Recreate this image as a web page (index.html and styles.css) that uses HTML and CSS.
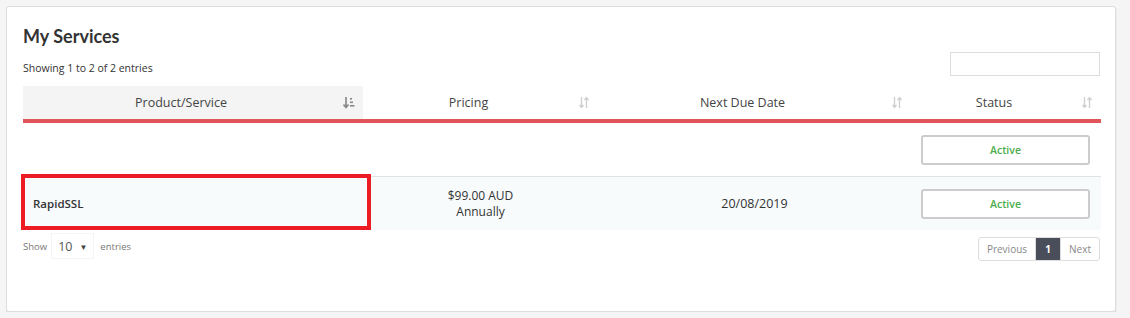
FILE: index.html
```html
<!DOCTYPE html>
<html>
<head>
  <meta charset="utf-8">
  <title>My Services</title>
  <link rel="stylesheet" href="styles.css">
</head>
<body>
  <div class="card">
    <h2 class="title">My Services</h2>
    <div class="toolbar">
      <span class="info">Showing 1 to 2 of 2 entries</span>
      <input class="search" type="text">
    </div>

    <div class="table-wrap">
      <table class="services">
        <thead>
          <tr>
            <th class="col-product sorted">Product/Service
              <svg class="sort" width="12" height="13" viewBox="0 0 12 13"><path d="M3 1v10M0.5 8.5L3 11.5 5.5 8.5" fill="none" stroke="#888" stroke-width="1.6"/><rect x="7" y="2" width="2" height="1.6" fill="#888"/><rect x="7" y="5.5" width="3" height="1.6" fill="#888"/><rect x="7" y="9" width="4.5" height="1.6" fill="#888"/></svg>
            </th>
            <th class="col-pricing">Pricing
              <svg class="sort" width="12" height="13" viewBox="0 0 12 13"><path d="M3.5 1v10.5M1.5 9L3.5 11.5 5.5 9M8.5 12V1.5M6.5 4L8.5 1.5 10.5 4" fill="none" stroke="#d0d0d0" stroke-width="1.4"/></svg>
            </th>
            <th class="col-due">Next Due Date
              <svg class="sort" width="12" height="13" viewBox="0 0 12 13"><path d="M3.5 1v10.5M1.5 9L3.5 11.5 5.5 9M8.5 12V1.5M6.5 4L8.5 1.5 10.5 4" fill="none" stroke="#d0d0d0" stroke-width="1.4"/></svg>
            </th>
            <th class="col-status">Status
              <svg class="sort" width="12" height="13" viewBox="0 0 12 13"><path d="M3.5 1v10.5M1.5 9L3.5 11.5 5.5 9M8.5 12V1.5M6.5 4L8.5 1.5 10.5 4" fill="none" stroke="#d0d0d0" stroke-width="1.4"/></svg>
            </th>
          </tr>
        </thead>
        <tbody>
          <tr>
            <td></td>
            <td></td>
            <td></td>
            <td><span class="status">Active</span></td>
          </tr>
          <tr class="alt">
            <td class="product"><strong>RapidSSL</strong></td>
            <td class="center">$99.00 AUD<br>Annually</td>
            <td class="center date">20/08/2019</td>
            <td><span class="status">Active</span></td>
          </tr>
        </tbody>
      </table>
      <div class="highlight"></div>
    </div>

    <div class="footer">
      <div class="length">
        Show
        <span class="select">10 <span class="caret">&#9660;</span></span>
        entries
      </div>
      <div class="pager">
        <a href="#" class="page">Previous</a>
        <a href="#" class="page current">1</a>
        <a href="#" class="page">Next</a>
      </div>
    </div>
  </div>
</body>
</html>
```

FILE: styles.css
```css
/* General Styling */
body {
  margin: 6px;
  padding: 0;
  background-color: #f5f5f5;
  font-family: "Open Sans", Arial, sans-serif;
  color: #333;
}

.card {
  width: 1077px;
  height: 286px;
  padding: 18px 15px 0 16px;
  background: white;
  border: 1px solid #ddd;
  border-radius: 3px;
  box-shadow: 0 2px 2px rgba(0, 0, 0, 0.12);
}

.title {
  margin: 0;
  font-family: Lato, "Open Sans", sans-serif;
  font-size: 18px;
  font-weight: bold;
  line-height: 22px;
  color: #333;
}

.toolbar {
  display: flex;
  justify-content: space-between;
  align-items: flex-end;
  margin-top: 5px;
}

.info {
  font-size: 10.5px;
  line-height: 14px;
  margin-bottom: 1px;
}

.search {
  width: 146px;
  height: 20px;
  margin: 0;
  padding: 1px;
  border: 1px solid #ddd;
  border-radius: 0;
}

/* Table */
.table-wrap {
  position: relative;
  margin-top: 10px;
}

.services {
  width: 1078px;
  border-collapse: collapse;
  table-layout: fixed;
}

.services th {
  position: relative;
  height: 33px;
  padding: 0 24px 0 0;
  font-size: 12.5px;
  font-weight: normal;
  color: #444;
  text-align: center;
  border-bottom: 4px solid #e0555a;
}

.services th.sorted {
  background-color: #f4f4f4;
}

.sort {
  position: absolute;
  right: 8px;
  top: 10px;
}

.col-product { width: 316px; }
.col-pricing { width: 211px; }
.col-due { width: 289px; }
.col-status { width: 166px; }

.services td {
  height: 53px;
  padding: 0;
  font-size: 12px;
  line-height: 16px;
}

.services tr.alt td {
  background-color: #f8fbfc;
  border-top: 1px solid #e2e2e2;
}

.product {
  padding-left: 10px !important;
}

.product strong {
  font-weight: 600;
  font-size: 11.5px;
}

.center {
  text-align: center;
}

.date {
  font-size: 12.5px !important;
}

.status {
  display: block;
  width: 165px;
  height: 26px;
  margin-left: 10px;
  background: white;
  border: 2px solid #ccc;
  border-radius: 3px;
  font-size: 10.5px;
  font-weight: 600;
  line-height: 26px;
  text-align: center;
  color: #4cae4c;
}

.highlight {
  position: absolute;
  left: -2px;
  top: 88px;
  width: 342px;
  height: 48px;
  border: 4px solid #ed1c24;
}

/* Footer */
.footer {
  display: flex;
  justify-content: space-between;
  align-items: flex-start;
  margin-top: 7px;
}

.length {
  display: flex;
  align-items: center;
  font-size: 9.5px;
  color: #777;
  margin-top: -4px;
}

.select {
  display: inline-flex;
  align-items: center;
  height: 24px;
  margin: 0 6px 0 4px;
  padding: 0 6px;
  border: 1px solid #f4f4f4;
  font-size: 12.5px;
  color: #555;
}

.caret {
  margin-left: 7px;
  font-size: 8px;
  color: #444;
}

.pager {
  display: flex;
  border: 1px solid #ddd;
  border-radius: 3px;
}

.page {
  display: block;
  height: 22px;
  padding: 0 8px;
  font-size: 10px;
  line-height: 22px;
  color: #888;
  text-decoration: none;
  border-left: 1px solid #ddd;
}

.page:first-child {
  border-left: none;
}

.page.current {
  width: 8px;
  background-color: #4a4d5a;
  color: white;
  font-weight: bold;
  text-align: center;
}
```
